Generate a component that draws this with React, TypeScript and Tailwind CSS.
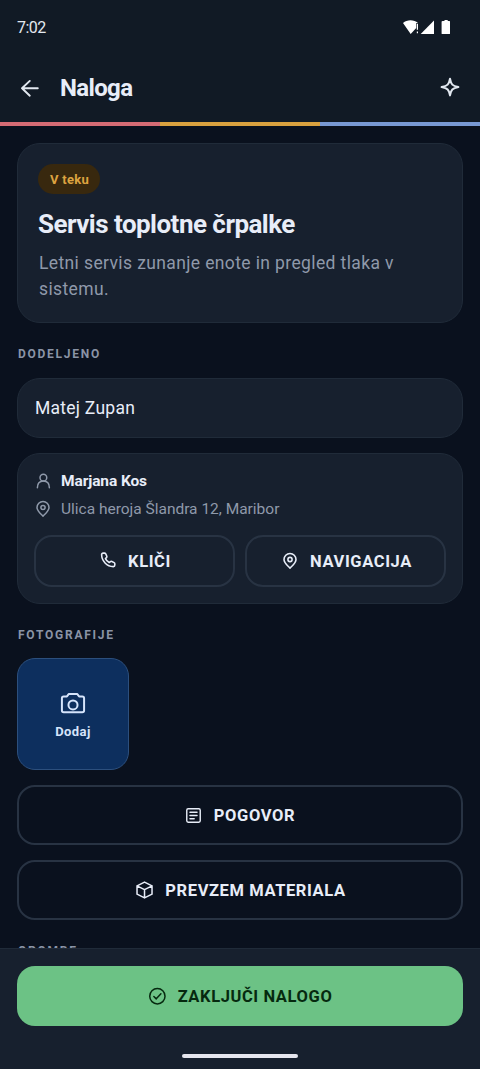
import type { ReactNode } from "react";

function Icon({
  size,
  className = "",
  stroke = 1.5,
  children,
}: {
  size: number;
  className?: string;
  stroke?: number;
  children: ReactNode;
}) {
  return (
    <svg
      width={size}
      height={size}
      viewBox="0 0 24 24"
      fill="none"
      stroke="currentColor"
      strokeWidth={stroke}
      strokeLinecap="round"
      strokeLinejoin="round"
      className={`shrink-0 ${className}`}
    >
      {children}
    </svg>
  );
}

function PinIcon({ size, className, stroke }: { size: number; className?: string; stroke?: number }) {
  return (
    <Icon size={size} className={className} stroke={stroke}>
      <path d="M12 21.5C9.5 18.8 4 14.8 4 10a8 8 0 0 1 16 0c0 4.800-5.500 8.800-8 11.500Z" />
      <circle cx="12" cy="10" r="2.800" />
    </Icon>
  );
}

function StatusBar() {
  return (
    <div className="flex h-[54px] items-center justify-between pl-[17px] pr-[29px]">
      <span className="pt-0.5 text-[16px] leading-5 tracking-[-0.5px] text-[#e2e8f0]">7:02</span>
      <svg width="49" height="16" viewBox="0 0 49 16" fill="#fff" className="shrink-0">
        <path d="M1 4C5 .2 12 .2 16 4h-1.800v5L8.700 15Z" />
        <path d="M14.800 4.800h1.200v6h-1.200zM14.800 12.500h1.200v1.700h-1.200z" />
        <path d="M32 1.500V15H18.700Z" />
        <path d="M40.500 2h2V1h3.200v1h1.900q.4 0 .4.400v12q0 .6-.6.600h-7.200q-.6 0-.6-.6v-12q0-.4.900-.4Z" />
      </svg>
    </div>
  );
}

function TopBar() {
  return (
    <div className="flex h-[68px] items-center pl-[18px] pr-[18px]">
      <Icon size={24} stroke={1.9} className="text-[#e2e8f0]">
        <path d="M19.800 12.300H4M11.800 4.900 4 12.300l7.800 7.400" />
      </Icon>
      <h1 className="ml-[18px] flex-1 text-[24px] leading-7 font-bold tracking-[-0.65px]">Naloga</h1>
      <Icon size={24} stroke={2} className="text-[#e2e8f0]">
        <path d="M12 2.800c1.100 5.800 2.300 7 8.400 8.300-6.100 1.300-7.300 2.500-8.400 8.300-1.100-5.800-2.300-7-8.400-8.300 6.100-1.300 7.300-2.500 8.400-8.300Z" />
      </Icon>
    </div>
  );
}

function Card({ className = "", children }: { className?: string; children: ReactNode }) {
  return (
    <section className={`rounded-[23px] border border-[#202b39] bg-[#17202e] ${className}`}>
      {children}
    </section>
  );
}

function SectionLabel({ className = "", children }: { className?: string; children: ReactNode }) {
  return (
    <h3
      className={`pl-px text-[12px] leading-4 font-bold tracking-[1.75px] text-[#8a94a6] ${className}`}
    >
      {children}
    </h3>
  );
}

function OutlineButton({
  icon,
  label,
  className = "",
}: {
  icon: ReactNode;
  label: string;
  className?: string;
}) {
  return (
    <button
      className={`flex items-center justify-center border-2 border-[#283343] text-[16.5px] font-bold tracking-[0.6px] ${className}`}
    >
      {icon}
      <span className="pt-0.5">{label}</span>
    </button>
  );
}

export default function App() {
  return (
    <div className="flex h-[1069px] w-[480px] flex-col overflow-hidden bg-[#0a111e] font-['Roboto',sans-serif] text-[#e8edf8]">
      <header className="shrink-0 bg-[#111a25]">
        <StatusBar />
        <TopBar />
        <div className="grid h-1 grid-cols-3">
          <div className="bg-[#d56b74]" />
          <div className="bg-[#d9a13f]" />
          <div className="bg-[#7899d3]" />
        </div>
      </header>

      <main className="min-h-0 flex-1 overflow-hidden px-[17px] pt-[17px]">
        <Card className="h-[180px] px-5 pt-[20px]">
          <span className="inline-flex h-[30px] items-center rounded-full bg-[#38280e] pt-px pr-[11px] pl-[12px] text-[13px] font-bold tracking-[0.3px] text-[#dda340]">
            V teku
          </span>
          <h2 className="mt-[13px] text-[26px] leading-[34px] font-bold tracking-[-0.53px]">
            Servis toplotne črpalke
          </h2>
          <p className="mt-[9px] ml-[1px] text-[17.5px] leading-[26px] tracking-[0.38px] text-[#8f99aa]">
            Letni servis zunanje enote in pregled tlaka v sistemu.
          </p>
        </Card>

        <SectionLabel className="mt-[23px]">DODELJENO</SectionLabel>
        <Card className="mt-4 flex h-[60px] items-center px-[17px] text-[17.5px] tracking-[0.25px]">
          Matej Zupan
        </Card>

        <Card className="mt-[15px] h-[151px] px-4 pt-[17px]">
          <div className="flex h-5 items-center gap-[9px]">
            <Icon size={18} stroke={2} className="text-[#8f99aa]">
              <circle cx="12.500" cy="7.500" r="4.500" />
              <path d="M4.500 21c0-5.500 3-9 8-9s8 3.500 8 9" />
            </Icon>
            <span className="pt-px text-[15.5px] font-bold tracking-[-0.1px]">Marjana Kos</span>
          </div>
          <div className="mt-2 flex h-5 items-center gap-[9px] text-[#8f99aa]">
            <PinIcon size={18} stroke={2} />
            <span className="pt-0.5 text-[15.5px] tracking-[-0.01px]">Ulica heroja Šlandra 12, Maribor</span>
          </div>
          <div className="mt-[16px] grid grid-cols-2 gap-[10px]">
            <OutlineButton
              className="h-[52px] gap-[11px] rounded-[18px] pl-px"
              label="KLIČI"
              icon={
                <Icon size={18} stroke={2.1} className="-mt-0.5">
                  <path d="M5.500 2.800h1.800q1 0 1.600.9l1.500 3.200q.5 1-.4 1.900L8.600 10.200q1.500 3.400 5 5.200l1.600-1.300q.9-.7 1.900-.2l3.100 1.600q.9.500.9 1.600v1.700q0 2-2 2C10.500 20.800 3.500 13.300 3.500 4.800q0-2 2-2Z" />
                </Icon>
              }
            />
            <OutlineButton
              className="h-[52px] gap-[11px] rounded-[18px] pl-0.5"
              label="NAVIGACIJA"
              icon={<PinIcon size={18} stroke={2.1} />}
            />
          </div>
        </Card>

        <SectionLabel className="mt-[23px]">FOTOGRAFIJE</SectionLabel>
        <button className="mt-[15px] flex h-[112px] w-[112px] flex-col items-center justify-center rounded-[18px] border border-[#2c4f7d] bg-[#0d2f5e] pt-[3px] text-[#d5e4fb]">
          <Icon size={28} stroke={1.7}>
            <path d="M4 5.500h2.800L8.300 3.500h7.400l1.500 2H20q1.500 0 1.500 1.500v10.500q0 1.500-1.500 1.500H4q-1.500 0-1.500-1.500V7Q2.500 5.500 4 5.500Z" />
            <circle cx="12" cy="12.800" r="3.900" />
          </Icon>
          <span className="mt-1 text-[13px] leading-5 font-bold tracking-[0.45px]">Dodaj</span>
        </button>

        <OutlineButton
          className="mt-[15px] h-[60px] w-full gap-3 rounded-[18px]"
          label="POGOVOR"
          icon={
            <Icon size={17} stroke={2}>
              <rect x="2.500" y="2.500" width="19" height="19" rx="2" />
              <path d="M7 7.500h10M7 12h10M7 16.500h6" />
            </Icon>
          }
        />
        <OutlineButton
          className="mt-[15px] h-[60px] w-full gap-3 rounded-[18px] pl-px"
          label="PREVZEM MATERIALA"
          icon={
            <Icon size={18} stroke={2}>
              <path d="m12.700 1.500 10 5v11l-10 5-10-5v-11ZM2.700 6.500l10 5 10-5M12.700 11.500v11" />
            </Icon>
          }
        />
        <SectionLabel className="mt-[23px]">OPOMBE</SectionLabel>
      </main>

      <footer className="h-[121px] shrink-0 border-t border-[#202b39] bg-[#17202e] px-[17px] pt-[17px]">
        <button className="flex h-[60px] w-full items-center justify-center gap-3 rounded-[18px] bg-[#6cc285] text-[16.5px] font-bold tracking-[0.6px] text-[#06290f]">
          <Icon size={18} stroke={2}>
            <circle cx="12.500" cy="12.300" r="10.200" />
            <path d="m7.800 12.600 3.200 3.200 6.200-6.700" />
          </Icon>
          <span className="pt-0.5">ZAKLJUČI NALOGO</span>
        </button>
        <div className="mx-auto mt-[28px] h-1 w-[116px] rounded-full bg-[#e6e6ee]" />
      </footer>
    </div>
  );
}
